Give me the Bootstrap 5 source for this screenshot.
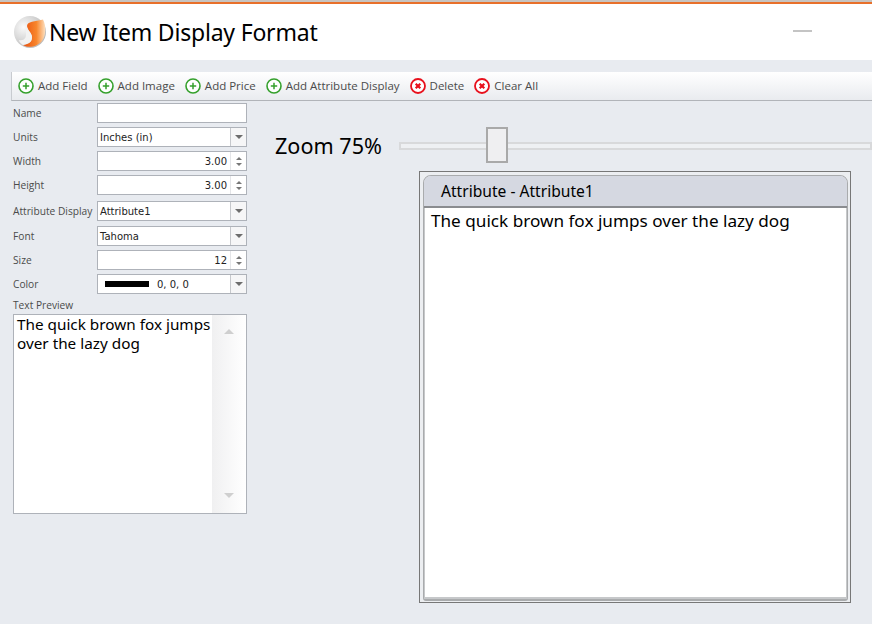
<!DOCTYPE html>
<html lang="en">
<head>
    <meta charset="UTF-8">
    <meta name="viewport" content="width=device-width, initial-scale=1.0">
    <title>New Item Display Format</title>
    <link href="https://cdn.jsdelivr.net/npm/bootstrap@5.3.0/dist/css/bootstrap.min.css" rel="stylesheet">
    <style>
        html, body { height: 100%; }
        body {
            background: #e8ebf0;
            font-family: "DejaVu Sans", sans-serif;
            overflow: hidden;
        }
        .top-strip { height: 4px; background: #c8c4c0; border-bottom: 2px solid #e8702a; }
        .title-bar { height: 56px; background: #fff; padding-left: 13px; }
        .title-text { font-family: "Noto Sans", sans-serif; font-size: 23px; letter-spacing: -0.2px; color: #000; margin-left: 2px; line-height: 1; }
        .min-line { width: 19px; height: 2px; background: #c4c4c4; margin-right: 60px; margin-top: -2px; }
        .tool-bar {
            height: 29px; margin: 12px 0 0 11px; padding-left: 6px; gap: 10px;
            background: linear-gradient(#fff, #e9ebef);
            border-left: 1px solid #c8cbd0; border-bottom: 1px solid #b1b4b9;
            font-family: "Open Sans", sans-serif; font-size: 11.5px; color: #4b4b4b;
        }
        .tool-btn { gap: 4px; }
        .form-pane { width: 234px; margin-left: 13px; padding-top: 2px; font-size: 10px; }
        .field-row { height: 20px; margin-bottom: 4px; }
        .field-row.gap-after { margin-bottom: 6px; }
        .field-row.gap-small { margin-bottom: 5px; }
        .field-label { width: 84px; flex: none; padding-top: 1px; color: #4b4b4b; font-family: "Open Sans", sans-serif; white-space: nowrap; font-size: 10.2px; }
        .field-box { width: 150px; height: 20px; background: #fff; border: 1px solid #aeb2b9; color: #222; }
        .field-value { padding: 1px 3px 0 2px; font-size: 10px; line-height: 18px; }
        .drop-btn { width: 16px; border-left: 1px solid #c6c8cc; background: #f6f6f7; }
        .spin-btn { width: 16px; gap: 3px; border-left: 1px solid #e4e5e8; }
        .tri-down { width: 0; height: 0; border: 4px solid transparent; border-top: 4px solid #6d6d6d; border-bottom: 0; }
        .tri-up { width: 0; height: 0; border: 3px solid transparent; border-bottom: 3px solid #777; border-top: 0; }
        .tri-small { width: 0; height: 0; border: 3px solid transparent; border-top: 3px solid #777; border-bottom: 0; }
        .color-swatch { width: 44px; height: 6px; background: #000; margin: 0 6px 0 7px; }
        .preview-label { margin-top: 4px; height: 16px; line-height: 14px; color: #4b4b4b; font-family: "Open Sans", sans-serif; font-size: 10.2px; }
        .preview-box { width: 234px; height: 200px; background: #fff; border: 1px solid #aeb2b9; }
        .preview-text { width: 198px; flex: none; padding: 0 0 0 3px; font-family: "Noto Sans", sans-serif; font-size: 15.3px; line-height: 19px; color: #000; white-space: nowrap; }
        .fake-scroll { width: 34px; background: linear-gradient(90deg, #f0f0f1, #fff); padding: 14px 0 15px; }
        .tri-scroll-up { width: 0; height: 0; border: 5px solid transparent; border-bottom: 5px solid #cfcfcf; border-top: 0; }
        .tri-scroll-down { width: 0; height: 0; border: 5px solid transparent; border-top: 5px solid #cfcfcf; border-bottom: 0; }
        .canvas-pane { min-width: 0; padding-left: 28px; }
        .zoom-row { height: 70px; margin-bottom: 0; }
        .zoom-text { width: 124px; flex: none; font-family: "Noto Sans", sans-serif; font-size: 21.6px; color: #000; padding-top: 29px; }
        .slider-track { height: 8px; background: #eef0f3; border: 2px solid #d8d9db; margin-top: 41px; }
        .slider-thumb { left: 85px; top: -17px; width: 22px; height: 36px; background: #efeff1; border: 2px solid #a9a9a9; position: absolute; }
        .item-frame {
            width: 432px; height: 432px; margin-left: 144px; padding: 3px 2px 1px 3px;
            border: 1px solid #777; background: #eceef1;
        }
        .item-frame-in { border: 1px solid #a9abad; border-bottom-width: 2px; border-radius: 8px 8px 3px 3px; }
        .item-head { height: 32px; padding: 1px 0 0 17px; background: #d5d8e1; border-bottom: 2px solid #8a8c90; border-radius: 7px 7px 0 0; font-family: "Noto Sans", sans-serif; font-size: 15.6px; color: #000; }
        .item-body { background: #fff; padding: 1px 0 0 6px; border: 1px solid #c6c8ca; border-top: 0; border-bottom-width: 2px; font-family: "Noto Sans", sans-serif; font-size: 17.15px; line-height: 24px; color: #000; }
    </style>
</head>
<body class="d-flex flex-column">
    <div class="top-strip"></div>
    <div class="title-bar d-flex align-items-center">
        <svg width="34" height="34" viewBox="0 0 34 34">
            <defs>
                <radialGradient id="ball" cx="0.3" cy="0.35" r="0.8">
                    <stop offset="0" stop-color="#fafafa"/>
                    <stop offset="1" stop-color="#b4b4b4"/>
                </radialGradient>
                <linearGradient id="swoosh" x1="0" y1="0" x2="1" y2="0">
                    <stop offset="0" stop-color="#e8500f"/>
                    <stop offset="0.6" stop-color="#f8862c"/>
                    <stop offset="1" stop-color="#fde0c0"/>
                </linearGradient>
            </defs>
            <circle cx="17" cy="17" r="16" fill="url(#ball)"/>
            <path d="M30 4.500C33 10 33.500 20 29 26C25 31 16 34 10 30C16 29 19 27 19 22C19 18 14 15 14 11C14 6 22 7 30 4.500Z" fill="url(#swoosh)"/>
            <path d="M14 11C14 15 19 18 19 22C19 27 16 29 10 30C7 28 6 26 6 25C11 26 13 23 13 20C13 17 12 14 14 11Z" fill="#f2f2f2"/>
        </svg>
        <div class="title-text">New Item Display Format</div>
        <div class="min-line ms-auto"></div>
    </div>

    <div class="tool-bar d-flex align-items-center">
        <div class="tool-btn d-flex align-items-center"><svg width="16" height="16" viewBox="0 0 16 16"><circle cx="8" cy="8" r="7" fill="#fff" stroke="#35a02c" stroke-width="1.600"/><path d="M4.800 8h6.400M8 4.800v6.400" stroke="#35a02c" stroke-width="1.500"/></svg><span>Add Field</span></div>
        <div class="tool-btn d-flex align-items-center"><svg width="16" height="16" viewBox="0 0 16 16"><circle cx="8" cy="8" r="7" fill="#fff" stroke="#35a02c" stroke-width="1.600"/><path d="M4.800 8h6.400M8 4.800v6.400" stroke="#35a02c" stroke-width="1.500"/></svg><span>Add Image</span></div>
        <div class="tool-btn d-flex align-items-center"><svg width="16" height="16" viewBox="0 0 16 16"><circle cx="8" cy="8" r="7" fill="#fff" stroke="#35a02c" stroke-width="1.600"/><path d="M4.800 8h6.400M8 4.800v6.400" stroke="#35a02c" stroke-width="1.500"/></svg><span>Add Price</span></div>
        <div class="tool-btn d-flex align-items-center"><svg width="16" height="16" viewBox="0 0 16 16"><circle cx="8" cy="8" r="7" fill="#fff" stroke="#35a02c" stroke-width="1.600"/><path d="M4.800 8h6.400M8 4.800v6.400" stroke="#35a02c" stroke-width="1.500"/></svg><span>Add Attribute Display</span></div>
        <div class="tool-btn d-flex align-items-center"><svg width="16" height="16" viewBox="0 0 16 16"><circle cx="8" cy="8" r="7" fill="#fff" stroke="#e8101c" stroke-width="1.800"/><path d="M5.700 5.700l4.600 4.600M10.300 5.700l-4.600 4.600" stroke="#e8101c" stroke-width="2.200"/></svg><span>Delete</span></div>
        <div class="tool-btn d-flex align-items-center"><svg width="16" height="16" viewBox="0 0 16 16"><circle cx="8" cy="8" r="7" fill="#fff" stroke="#e8101c" stroke-width="1.800"/><path d="M5.700 5.700l4.600 4.600M10.300 5.700l-4.600 4.600" stroke="#e8101c" stroke-width="2.200"/></svg><span>Clear All</span></div>
    </div>

    <div class="d-flex flex-grow-1">
        <div class="form-pane flex-shrink-0">
            <div class="field-row d-flex align-items-center"><div class="field-label">Name</div><div class="field-box"></div></div>
            <div class="field-row d-flex align-items-center"><div class="field-label">Units</div><div class="field-box d-flex"><div class="field-value flex-grow-1">Inches (in)</div><div class="drop-btn d-flex align-items-center justify-content-center"><div class="tri-down"></div></div></div></div>
            <div class="field-row d-flex align-items-center"><div class="field-label">Width</div><div class="field-box d-flex"><div class="field-value flex-grow-1 text-end">3.00</div><div class="spin-btn d-flex flex-column align-items-center justify-content-center"><div class="tri-up"></div><div class="tri-small"></div></div></div></div>
            <div class="field-row gap-after d-flex align-items-center"><div class="field-label">Height</div><div class="field-box d-flex"><div class="field-value flex-grow-1 text-end">3.00</div><div class="spin-btn d-flex flex-column align-items-center justify-content-center"><div class="tri-up"></div><div class="tri-small"></div></div></div></div>
            <div class="field-row gap-small d-flex align-items-center"><div class="field-label">Attribute Display</div><div class="field-box d-flex"><div class="field-value flex-grow-1">Attribute1</div><div class="drop-btn d-flex align-items-center justify-content-center"><div class="tri-down"></div></div></div></div>
            <div class="field-row d-flex align-items-center"><div class="field-label">Font</div><div class="field-box d-flex"><div class="field-value flex-grow-1">Tahoma</div><div class="drop-btn d-flex align-items-center justify-content-center"><div class="tri-down"></div></div></div></div>
            <div class="field-row d-flex align-items-center"><div class="field-label">Size</div><div class="field-box d-flex"><div class="field-value flex-grow-1 text-end">12</div><div class="spin-btn d-flex flex-column align-items-center justify-content-center"><div class="tri-up"></div><div class="tri-small"></div></div></div></div>
            <div class="field-row d-flex align-items-center"><div class="field-label">Color</div><div class="field-box d-flex"><div class="d-flex align-items-center flex-grow-1"><div class="color-swatch"></div><div class="field-value">0, 0, 0</div></div><div class="drop-btn d-flex align-items-center justify-content-center"><div class="tri-down"></div></div></div></div>
            <div class="preview-label">Text Preview</div>
            <div class="preview-box d-flex">
                <div class="preview-text">The quick brown fox jumps<br>over the lazy dog</div>
                <div class="fake-scroll flex-grow-1 d-flex flex-column align-items-center justify-content-between"><div class="tri-scroll-up"></div><div class="tri-scroll-down"></div></div>
            </div>
        </div>

        <div class="canvas-pane flex-grow-1">
            <div class="zoom-row d-flex">
                <div class="zoom-text">Zoom 75%</div>
                <div class="flex-grow-1"><div class="slider-track position-relative"><div class="slider-thumb"></div></div></div>
            </div>
            <div class="item-frame d-flex">
                <div class="item-frame-in flex-grow-1 d-flex flex-column">
                    <div class="item-head d-flex align-items-center">Attribute - Attribute1</div>
                    <div class="item-body flex-grow-1">The quick brown fox jumps over the lazy dog</div>
                </div>
            </div>
        </div>
    </div>
    <script src="https://cdn.jsdelivr.net/npm/bootstrap@5.3.0/dist/js/bootstrap.bundle.min.js"></script>
</body>
</html>
